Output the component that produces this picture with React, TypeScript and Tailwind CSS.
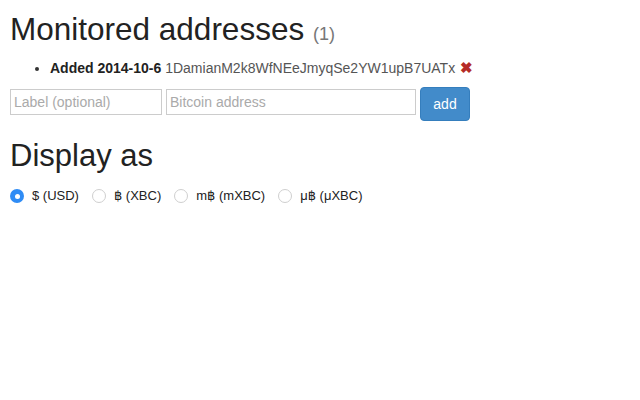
import React from "react";

function Radio({ checked }: { checked?: boolean }) {
  return checked ? (
    <span className="inline-flex h-[14px] w-[14px] items-center justify-center rounded-full bg-[#2f8cf5]">
      <span className="h-[5px] w-[5px] rounded-full bg-white" />
    </span>
  ) : (
    <span className="inline-block h-[14px] w-[14px] rounded-full border border-[#cfcfcf] bg-white" />
  );
}

const B = () => <span className="[font-family:'DejaVu_Sans',sans-serif] text-[13px] text-[#222]">฿</span>;

export default function App() {
  const opts = [
    { label: <>$ (USD)</>, checked: true },
    { label: <><B /> (XBC)</> },
    { label: <>m<B /> (mXBC)</> },
    { label: <>μ<B /> (μXBC)</> },
  ];
  return (
    <div className="min-h-[400px] w-[640px] bg-white px-[10px] text-[#333] [font-family:'Liberation_Sans',Arial,sans-serif]">
      <h1 className="pt-[11px] text-[31.5px] leading-[36px] font-normal text-[#222]">
        Monitored addresses <span className="text-[18px] leading-none text-[#777]">(1)</span>
      </h1>
      <ul className="mt-[11px] list-disc pl-[40px] text-[14px] leading-[20px]">
        <li>
          <b className="text-[#222]">Added 2014-10-6</b>{" "}
          <span className="text-[#555]">1DamianM2k8WfNEeJmyqSe2YW1upB7UATx</span>{" "}
          <span className="ml-[1px] text-[15px] leading-none font-bold text-[#b52b27]">✖</span>
        </li>
      </ul>
      <div className="mt-[9px] flex items-start">
        <input
          className="mt-[2px] h-[26px] w-[152px] border border-[#ccc] px-[3px] text-[14px] outline-none placeholder:text-[#aaa]"
          placeholder="Label (optional)"
        />
        <input
          className="mt-[2px] ml-[4px] h-[26px] w-[250px] border border-[#ccc] px-[3px] text-[14px] outline-none placeholder:text-[#aaa]"
          placeholder="Bitcoin address"
        />
        <button className="ml-[4px] h-[34px] w-[50px] rounded-[4px] border border-[#357ebd] bg-[#428bca] text-[14px] text-white">
          add
        </button>
      </div>
      <h2 className="mt-[17px] text-[31px] leading-[36px] font-normal text-[#222]">Display as</h2>
      <div className="mt-[14px] flex h-[16px] items-center text-[13px] text-[#222]">
        {opts.map((o, i) => (
          <label key={i} className="mr-[13px] flex items-center">
            <Radio checked={o.checked} />
            <span className="ml-[8px]">{o.label}</span>
          </label>
        ))}
      </div>
    </div>
  );
}
